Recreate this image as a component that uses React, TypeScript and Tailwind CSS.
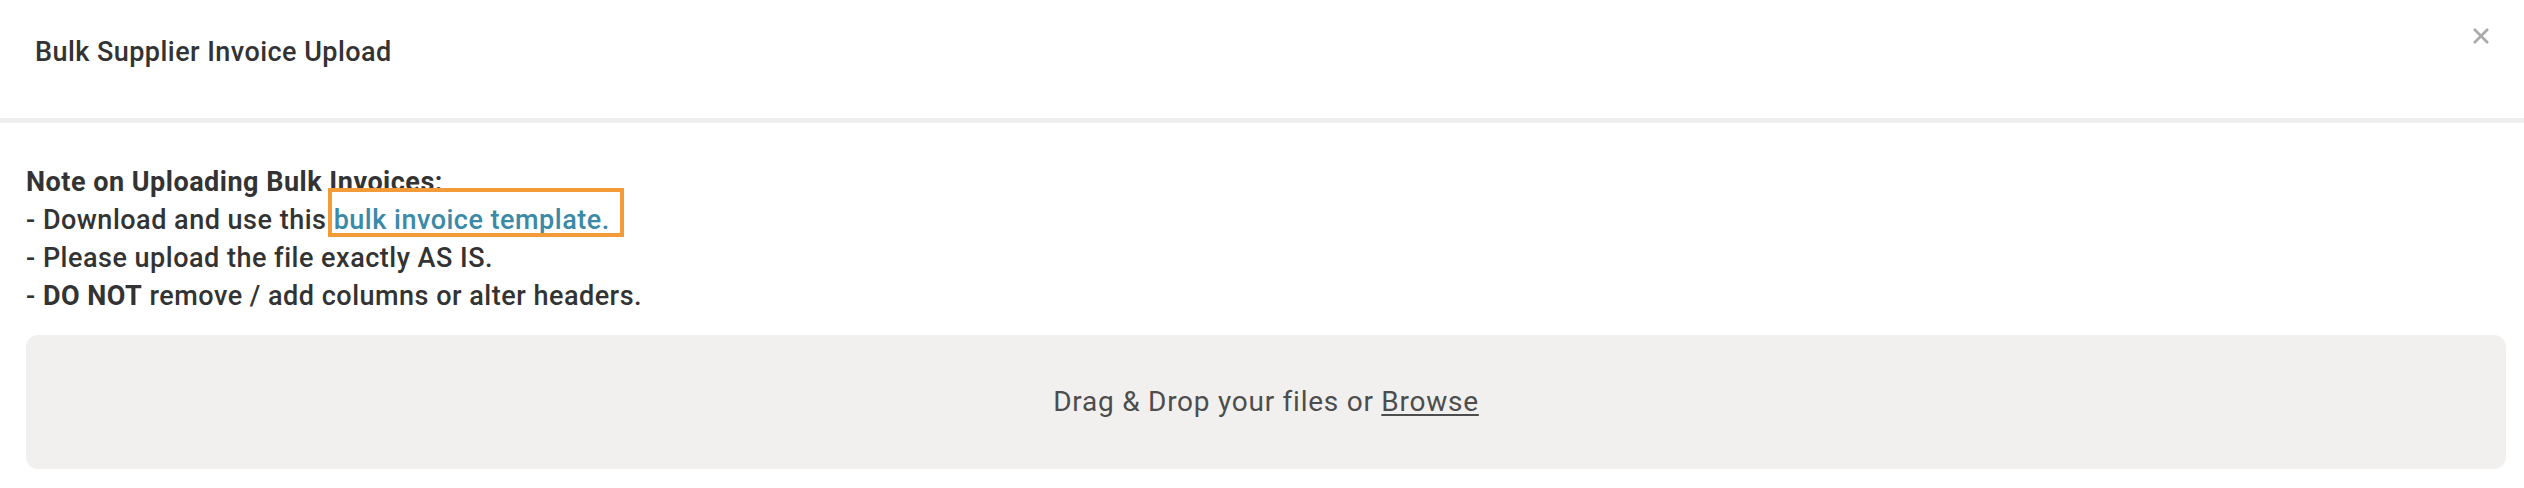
export default function App() {
  return (
    <div className="min-h-[488px] w-full bg-white font-['Roboto',sans-serif] text-[#333333]">
      <header className="flex items-start justify-between border-b-[5px] border-[#eeeeee] pb-[47px] pl-[35px] pr-[34px] pt-[33px]">
        <h1 className="text-[27px] font-medium leading-[38px] tracking-[0.45px]">
          Bulk Supplier Invoice Upload
        </h1>
        <button type="button" aria-label="Close" className="mt-[-6px] text-[#aaaaaa]">
          <svg width="18" height="18" viewBox="0 0 18 18" fill="none">
            <path d="M2 2 L16 16 M16 2 L2 16" stroke="currentColor" strokeWidth="2.6" />
          </svg>
        </button>
      </header>

      <main className="px-[18px] pb-[18px] pl-[26px] pt-[40px]">
        <div className="text-[27px] font-medium leading-[38px] tracking-[0.5px]">
          <div className="font-bold">Note on Uploading Bulk Invoices:</div>
          <div>
            - Download and use this{" "}
            <a href="#" className="relative text-[#3a8aa8]">
              bulk invoice template.
              <span className="pointer-events-none absolute -bottom-[1px] -left-[6px] -right-[14px] -top-[16px] border-4 border-[#f29b38]" />
            </a>
          </div>
          <div>- Please upload the file exactly AS IS.</div>
          <div>
            - <span className="font-bold">DO NOT</span> remove / add columns or alter headers.
          </div>
        </div>

        <div className="mt-[20px] flex h-[134px] items-center justify-center rounded-[12px] bg-[#f1f0ee] text-[28px] leading-[38px] tracking-[0.75px] text-[#4d4d4d]">
          <span>
            Drag &amp; Drop your files or <span className="cursor-pointer underline underline-offset-[3px]">Browse</span>
          </span>
        </div>
      </main>
    </div>
  );
}
